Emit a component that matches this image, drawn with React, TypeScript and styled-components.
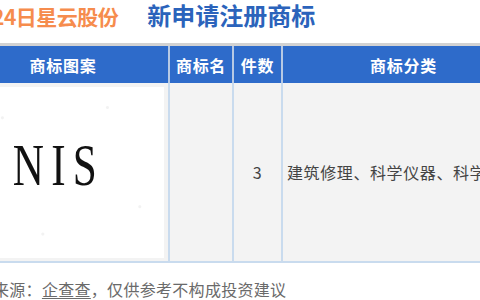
import React from 'react';
import styled, { createGlobalStyle } from 'styled-components';

const GlobalStyle = createGlobalStyle`
  html, body {
    margin: 0;
    padding: 0;
    background: #ffffff;
    overflow: hidden;
  }
  body {
    font-family: "Noto Sans CJK SC", "Noto Sans", sans-serif;
  }
`;

const Page = styled.div`
  width: 600px;
  margin-left: -42px;
`;

const Title = styled.div`
  display: flex;
  align-items: baseline;
  height: 43px;
  box-sizing: border-box;
  padding: 3px 0 0 34px;
  font-weight: 700;
  white-space: nowrap;
`;

const DatePart = styled.span`
  color: #f68c4d;
  font-size: 21px;
  letter-spacing: -0.5px;
  line-height: 24px;
`;

const Headline = styled.span`
  color: #2b63bb;
  font-size: 24px;
  line-height: 24px;
  margin-left: 29px;
`;

const Table = styled.div`
  border-top: 3px solid #d2d2d2;
  border-bottom: 2px solid #c9dbee;
`;

const Row = styled.div<{ $head?: boolean }>`
  display: grid;
  grid-template-columns: 210px 62px 47px 241px;
  column-gap: 2px;
  height: ${p => (p.$head ? '37px' : '178px')};
  background: ${p => (p.$head ? '#b7c9e4' : '#c9dbee')};
`;

const HeadCell = styled.div`
  display: flex;
  align-items: center;
  justify-content: center;
  background: #2e6bca;
  color: #ffffff;
  font-size: 16px;
  font-weight: 700;
  letter-spacing: 0.7px;
`;

const Cell = styled.div<{ $align?: 'left' | 'center' }>`
  display: flex;
  align-items: center;
  justify-content: ${p => (p.$align === 'left' ? 'flex-start' : 'center')};
  padding-left: ${p => (p.$align === 'left' ? '4px' : '0')};
  background: #f3f3f3;
  color: #444444;
  font-size: 16px;
  letter-spacing: 0.6px;
  white-space: nowrap;
  overflow: hidden;
`;

const ImageCell = styled.div`
  background: #f3f3f3;
  padding: 4px 4px 3px 4px;
`;

const MarkImage = styled.div`
  height: 100%;
  display: flex;
  align-items: center;
  justify-content: center;
  padding-bottom: 16px;
  box-sizing: border-box;
  background-color: #ffffff;
  background-image:
    radial-gradient(circle at 20% 18%, rgba(0, 0, 0, 0.05) 0 1px, transparent 2px),
    radial-gradient(circle at 72% 12%, rgba(0, 0, 0, 0.05) 0 1px, transparent 2px),
    radial-gradient(circle at 88% 70%, rgba(0, 0, 0, 0.05) 0 1px, transparent 2px),
    radial-gradient(circle at 40% 86%, rgba(0, 0, 0, 0.05) 0 1px, transparent 2px);
`;

const MarkText = styled.span`
  font-family: "Liberation Serif", "Times New Roman", serif;
  font-size: 60px;
  line-height: 1;
  color: #111111;
  letter-spacing: 10px;
  transform: scaleX(0.72);
  margin-left: -10px;
`;

const Footer = styled.div`
  padding: 16px 0 0 35px;
  font-size: 16px;
  line-height: 20px;
  letter-spacing: 0.3px;
  color: #6a6a6a;
  white-space: nowrap;
`;

const Source = styled.span`
  text-decoration: underline;
  text-underline-offset: 2px;
`;

export default function App() {
  return (
    <>
      <GlobalStyle />
      <Page>
        <Title>
          <DatePart>24日星云股份</DatePart>
          <Headline>新申请注册商标</Headline>
        </Title>
        <Table>
          <Row $head>
            <HeadCell>商标图案</HeadCell>
            <HeadCell>商标名</HeadCell>
            <HeadCell>件数</HeadCell>
            <HeadCell>商标分类</HeadCell>
          </Row>
          <Row>
            <ImageCell>
              <MarkImage>
                <MarkText>NIS</MarkText>
              </MarkImage>
            </ImageCell>
            <Cell />
            <Cell>3</Cell>
            <Cell $align="left">建筑修理、科学仪器、科学服务</Cell>
          </Row>
        </Table>
        <Footer>
          来源：<Source>企查查</Source>，仅供参考不构成投资建议
        </Footer>
      </Page>
    </>
  );
}
